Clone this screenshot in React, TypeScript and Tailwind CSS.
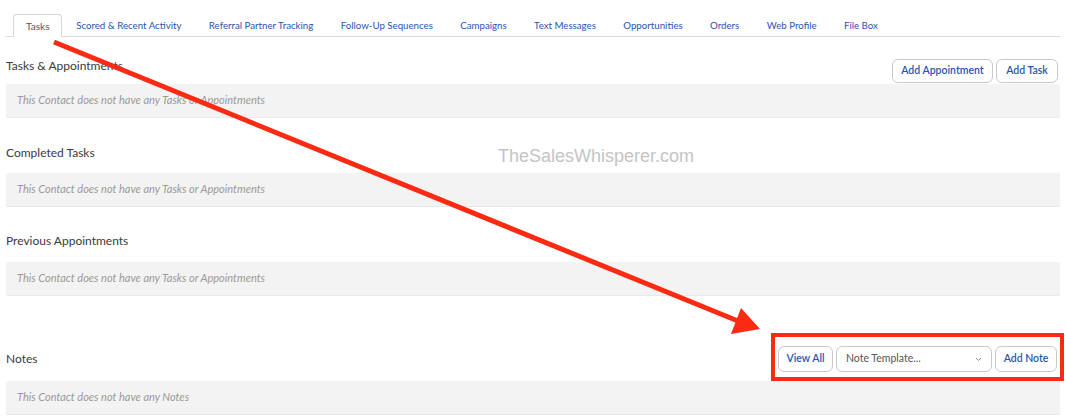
import React from 'react'

const tabs = [
    'Scored & Recent Activity',
    'Referral Partner Tracking',
    'Follow-Up Sequences',
    'Campaigns',
    'Text Messages',
    'Opportunities',
    'Orders',
    'Web Profile',
    'File Box',
]

const font = { fontFamily: 'Lato, "Open Sans", Arial, sans-serif' }

function Btn({ label, w }: { label: string; w: string }) {
    return (
        <button className={`${w} h-[24px] rounded-[6px] border border-[#c9c9c9] bg-white text-[10.5px] font-semibold text-[#1f55b0]`}>
            {label}
        </button>
    )
}

function EmptyBox({ text }: { text: string }) {
    return (
        <div className="h-[34px] flex items-center px-[11px] bg-[#f3f3f3] border-b border-[#e9e9e9] rounded-[2px]">
            <span className="text-[11px] italic text-[#9a9a9a]">{text}</span>
        </div>
    )
}

export default function App() {
    return (
        <div className="relative w-[1066px] h-[419px] bg-white overflow-hidden" style={font}>
            {/* tab bar */}
            <div className="pt-[14px] px-[6px]">
                <div className="flex items-end border-b border-[#dcdcdc] h-[23px]">
                    <div className="ml-[7px] h-[23px] px-[12px] flex items-center border border-b-0 border-[#d6d6d6] rounded-t-[4px] bg-white text-[10px] text-[#555] -mb-px">
                        Tasks
                    </div>
                    {tabs.map(t => (
                        <div key={t} className="h-[22px] px-[13.7px] flex items-center text-[9.7px] text-[#1f55b0] whitespace-nowrap">
                            {t}
                        </div>
                    ))}
                </div>
            </div>

            <div className="px-[6px]">
                <div className="flex justify-between items-end h-[47px] pb-[1px]">
                    <div className="text-[12px] text-[#3a3a3a] mb-[8px]">Tasks &amp; Appointments</div>
                    <div className="flex gap-[3px] mr-[2px]">
                        <Btn label="Add Appointment" w="w-[101px]" />
                        <Btn label="Add Task" w="w-[62px]" />
                    </div>
                </div>
                <EmptyBox text="This Contact does not have any Tasks or Appointments" />

                <div className="mt-[25.5px] mb-[13px] h-[16px] text-[12px] text-[#3a3a3a]">Completed Tasks</div>
                <EmptyBox text="This Contact does not have any Tasks or Appointments" />

                <div className="mt-[25.5px] mb-[14px] h-[16px] text-[12px] text-[#3a3a3a]">Previous Appointments</div>
                <EmptyBox text="This Contact does not have any Tasks or Appointments" />

                <div className="mt-[50px] mb-[9px] flex justify-between items-center h-[26px]">
                    <div className="text-[12px] text-[#3a3a3a]">Notes</div>
                    <div className="flex gap-[3px] mr-[3px]">
                        <button className="w-[55px] h-[26px] rounded-[6px] border border-[#c9c9c9] bg-white text-[10.5px] font-semibold text-[#1f55b0]">
                            View All
                        </button>
                        <div className="h-[26px] w-[156px] px-[9px] rounded-[6px] border border-[#c9c9c9] bg-white flex items-center justify-between text-[10.5px] text-[#555]">
                            <span>Note Template...</span>
                            <svg width="7" height="5" viewBox="0 0 7 5" fill="none" stroke="#888" strokeWidth="1">
                                <path d="M1 1l2.5 2.5L6 1" />
                            </svg>
                        </div>
                        <button className="w-[62px] h-[26px] rounded-[6px] border border-[#c9c9c9] bg-white text-[10.5px] font-semibold text-[#1f55b0]">
                            Add Note
                        </button>
                    </div>
                </div>
                <EmptyBox text="This Contact does not have any Notes" />
            </div>

            {/* watermark */}
            <div
                className="absolute left-[498px] top-[143px] text-[18px] text-[#c4c4c4] pointer-events-none"
                style={{ fontFamily: '"Liberation Sans", Arial, sans-serif' }}
            >
                TheSalesWhisperer.com
            </div>

            {/* annotation overlay */}
            <svg className="absolute left-0 top-0 pointer-events-none" width="1066" height="419">
                <line x1="54" y1="42" x2="738" y2="321" stroke="#fb2a12" strokeWidth="5" />
                <polygon points="760,329 741,308 731,334" fill="#fb2a12" />
                <rect x="773" y="335" width="289" height="44" fill="none" stroke="#fb2a12" strokeWidth="4" />
            </svg>
        </div>
    )
}
